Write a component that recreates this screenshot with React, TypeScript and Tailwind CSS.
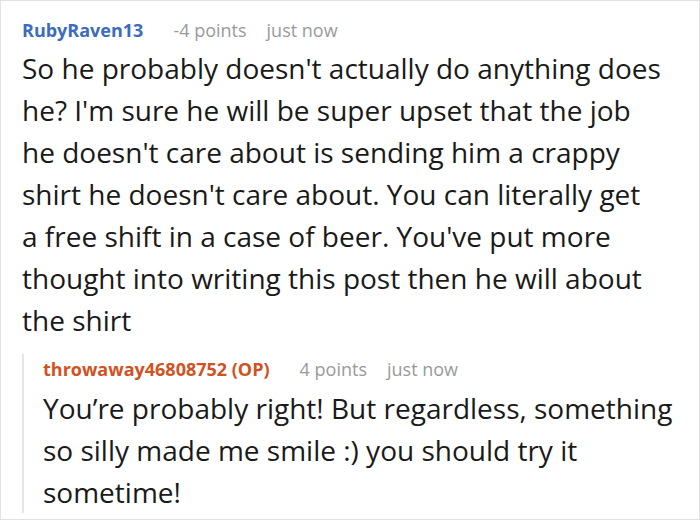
import React from 'react';

interface CommentProps {
  author: string;
  authorClass: string;
  points: string;
  time: string;
  body: string;
}

function CommentHeader({ author, authorClass, points, time }: Omit<CommentProps, 'body'>) {
  return (
    <div className="flex items-center h-[30px] text-[18px]">
      <span className={`font-bold ${authorClass}`}>{author}</span>
      <span className="ml-[30px] text-[#9a9a9a]">{points}</span>
      <span className="ml-[20px] text-[#9a9a9a]">{time}</span>
    </div>
  );
}

export default function App() {
  return (
    <div
      className="w-[700px] h-[520px] bg-white border border-[#e2e2e2] text-[#1a1a1a] overflow-hidden"
      style={{ fontFamily: '"Open Sans", "Noto Sans", sans-serif' }}
    >
      <div className="pl-[21px] pr-[12px] pt-[14px]">
        <CommentHeader author="RubyRaven13" authorClass="text-[#3b6cbd]" points="-4 points" time="just now" />
        <p className="mt-[2px] mr-[25px] text-[28px] leading-[42px]">
          So he probably doesn't actually do anything does he? I'm sure he will be super upset that the job he doesn't care about is sending him a crappy shirt he doesn't care about. You can literally get a free shift in a case of beer. You've put more thought into writing this post then he will about the shirt
        </p>

        {/* Reply */}
        <div className="mt-[13px] border-l-2 border-[#e6e6e6] pl-[19px]">
          <CommentHeader
            author="throwaway46808752 (OP)"
            authorClass="text-[#d2521f]"
            points="4 points"
            time="just now"
          />
          <p className="mt-[3px] -mb-[13px] text-[28px] leading-[42px]">
            You’re probably right! But regardless, something so silly made me smile :) you should try it sometime!
          </p>
        </div>
      </div>
    </div>
  );
}
